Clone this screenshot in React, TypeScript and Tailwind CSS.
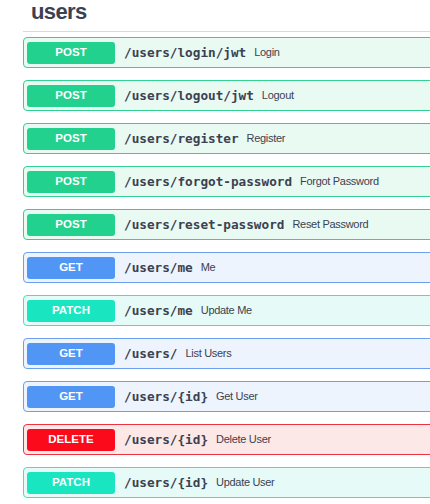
const routes = [
  { method: "POST", path: "/users/login/jwt", summary: "Login" },
  { method: "POST", path: "/users/logout/jwt", summary: "Logout" },
  { method: "POST", path: "/users/register", summary: "Register" },
  { method: "POST", path: "/users/forgot-password", summary: "Forgot Password" },
  { method: "POST", path: "/users/reset-password", summary: "Reset Password" },
  { method: "GET", path: "/users/me", summary: "Me" },
  { method: "PATCH", path: "/users/me", summary: "Update Me" },
  { method: "GET", path: "/users/", summary: "List Users" },
  { method: "GET", path: "/users/{id}", summary: "Get User" },
  { method: "DELETE", path: "/users/{id}", summary: "Delete User" },
  { method: "PATCH", path: "/users/{id}", summary: "Update User" },
];

const styles: Record<string, { row: string; badge: string }> = {
  POST: { row: "bg-[#e9faf3] border-[#33d093]", badge: "bg-[#22d18d]" },
  GET: { row: "bg-[#edf4fd] border-[#6b9fef]", badge: "bg-[#5196f5]" },
  PATCH: { row: "bg-[#e6fbf7] border-[#3ee3c3]", badge: "bg-[#19e6c1]" },
  DELETE: { row: "bg-[#fde8e8] border-[#ee3340]", badge: "bg-[#fb0a1c]" },
};

export default function App() {
  return (
    <div className="w-[430px] h-[504px] overflow-hidden bg-white font-['Liberation_Sans',Arial,sans-serif]">
      <div className="w-[470px] pl-[23px]">
        <div className="h-[32px] border-b border-[#d9d9d9] pl-[8px] flex items-start">
          <h3 className="text-[22px] font-bold text-[#3b4151] leading-none mt-[1px] tracking-[-0.6px]">users</h3>
        </div>
        <div className="pt-[5px] flex flex-col gap-[12px]">
          {routes.map((r, i) => (
            <div
              key={i}
              className={`h-[31px] border rounded-[4px] flex items-center pl-[3px] ${styles[r.method].row}`}
            >
              <span
                className={`w-[88px] h-[22px] rounded-[3px] flex items-center justify-center text-white text-[11.5px] font-bold shrink-0 ${styles[r.method].badge}`}
              >
                {r.method}
              </span>
              <span className="ml-[9px] font-['DejaVu_Sans_Mono',monospace] font-bold text-[12.7px] text-[#3b4151]">
                {r.path}
              </span>
              <span className="ml-[8px] text-[11px] text-[#3b4151] tracking-[-0.3px]">{r.summary}</span>
            </div>
          ))}
        </div>
      </div>
    </div>
  );
}
